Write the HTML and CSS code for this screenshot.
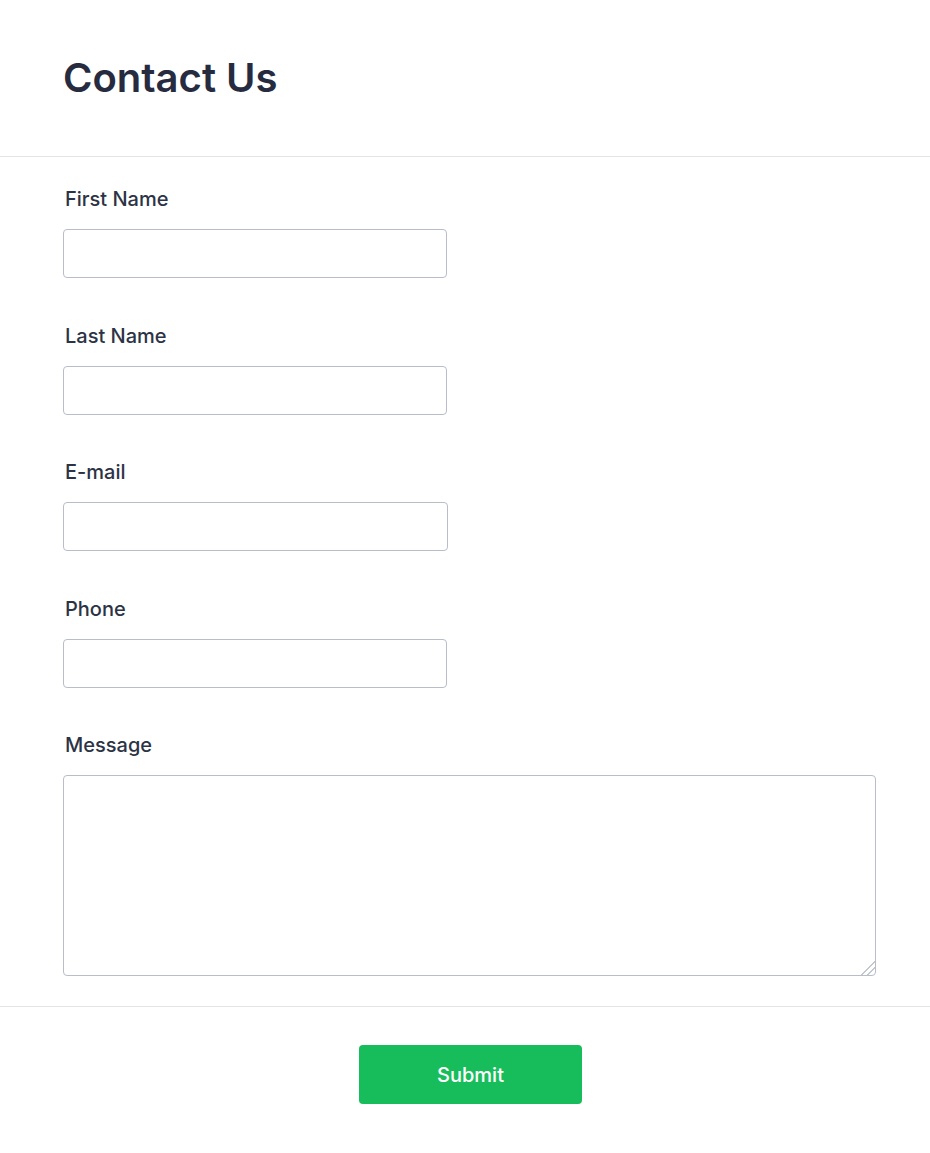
FILE: index.html
```html
<!DOCTYPE html>
<html lang="en">
<head>
<meta charset="utf-8">
<title>Contact Us</title>
<link rel="stylesheet" href="styles.css">
</head>
<body>
<div class="page">
  <header class="form-header">
    <h1 class="title">Contact Us</h1>
  </header>
  <form class="form-body">
    <div class="field">
      <label class="label" for="fname">First Name</label>
      <input class="input" id="fname" type="text">
    </div>
    <div class="field">
      <label class="label" for="lname">Last Name</label>
      <input class="input" id="lname" type="text">
    </div>
    <div class="field">
      <label class="label" for="email">E-mail</label>
      <input class="input input-wide" id="email" type="email">
    </div>
    <div class="field">
      <label class="label" for="phone">Phone</label>
      <input class="input" id="phone" type="tel">
    </div>
    <div class="field field-last">
      <label class="label" for="msg">Message</label>
      <textarea class="textarea" id="msg"></textarea>
    </div>
  </form>
  <footer class="form-footer">
    <button class="submit" type="button">Submit</button>
  </footer>
</div>
</body>
</html>
```

FILE: styles.css
```css
* { box-sizing: border-box; }
html, body {
  margin: 0;
  padding: 0;
  background: #ffffff;
  font-family: Inter, "Noto Sans", "Liberation Sans", sans-serif;
}
.page {
  width: 930px;
  min-height: 1153px;
}
.form-header {
  padding: 54px 63px 54px;
  border-bottom: 1px solid #e3e4ea;
}
.title {
  margin: 0;
  font-size: 40px;
  line-height: 48px;
  font-weight: 600;
  color: #262b40;
}
.form-body {
  padding: 30px 63px 30px;
  border-bottom: 1px solid #e3e4ea;
  display: flex;
  flex-direction: column;
  gap: 45.5px;
}
.field {
  display: flex;
  flex-direction: column;
  gap: 18px;
  align-items: flex-start;
}
.label {
  padding-left: 2px;
  font-size: 20px;
  line-height: 24px;
  font-weight: 500;
  color: #2c3345;
}
.input {
  width: 384px;
  height: 49px;
  border: 1px solid #b8bdc9;
  border-radius: 4px;
  background: #fff;
  margin: 0;
  padding: 0 10px;
  font: inherit;
}
.input-wide { width: 385px; }
.textarea {
  width: 813px;
  height: 201px;
  border: 1px solid #b8bdc9;
  border-radius: 4px;
  background: #fff;
  margin: 0;
  padding: 10px;
  font: inherit;
  resize: both;
  display: block;
}
.textarea::-webkit-resizer {
  background: linear-gradient(135deg,
    transparent 0 52%, #c3c7d1 52% 60%,
    transparent 60% 72%, #c3c7d1 72% 80%,
    transparent 80%);
}
.form-footer {
  display: flex;
  justify-content: center;
  padding: 38px 0 0 11px;
}
.submit {
  width: 223px;
  height: 59px;
  border: none;
  border-radius: 4px;
  background: #18bd5b;
  color: #ffffff;
  font-family: Inter, "Noto Sans", "Liberation Sans", sans-serif;
  font-size: 20px;
  font-weight: 500;
  cursor: pointer;
}
```
